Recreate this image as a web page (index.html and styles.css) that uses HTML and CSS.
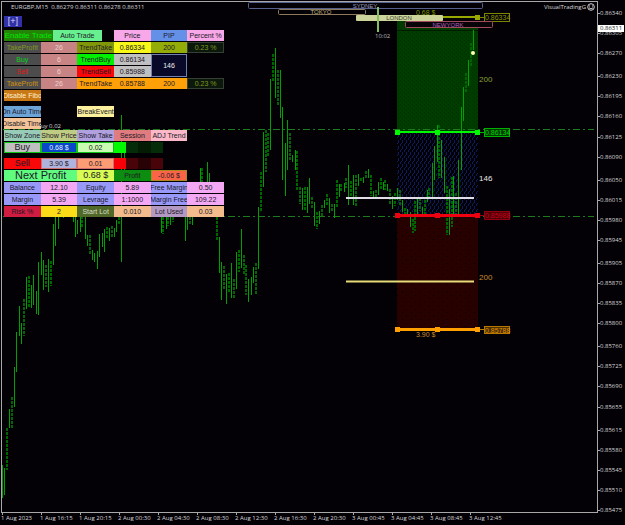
FILE: index.html
```html
<!DOCTYPE html>
<html lang="en">
<head>
<meta charset="utf-8">
<title>EURGBP,M15</title>
<link rel="stylesheet" href="styles.css">
</head>
<body>
<main class="terminal">
  <section class="plot">
    <svg class="chart" viewBox="2 2 595 510" preserveAspectRatio="xMinYMin meet" role="img" aria-label="EURGBP M15 price chart">
      <defs>
        <pattern id="blueDots" width="4" height="6" patternUnits="userSpaceOnUse">
          <path d="M0 0h1v2h-1zM2 2h1v3h-1zM1 5h1v1h-1z" fill="#0b1d5c"/>
        </pattern>
        <pattern id="redDots" width="9" height="7" patternUnits="userSpaceOnUse">
          <path d="M1 1h1v1h-1zM6 4h1v1h-1z" fill="#0c0000"/>
        </pattern>
        <pattern id="greenDots" width="4" height="4" patternUnits="userSpaceOnUse">
          <path d="M0 0h1v1h-1zM2 2h1v1h-1z" fill="#003000"/>
        </pattern>
      </defs>
      <rect x="397" y="21" width="81" height="111" fill="#003c00"/>
      <rect x="397" y="21" width="81" height="111" fill="url(#greenDots)"/>
      <rect x="397" y="132" width="81" height="84" fill="url(#blueDots)"/>
      <rect x="397" y="216" width="81" height="113" fill="#270000"/>
      <rect x="397" y="216" width="81" height="113" fill="url(#redDots)"/>
      <path d="M397 30.5H478" stroke="#001a00"/>
      <path class="level" d="M3 129.500H594M3 216.500H594"/>
      <path class="bars" d="M2.500 465V498M4.500 468V495M9.500 409V428M14.500 367V407M16.500 332V372M19.500 306V336M21.500 323V344M26.500 277V309M31.500 285V308M33.500 275V305M36.500 291V314M38.500 262V315M41.500 252V275M43.500 260V290M48.500 259V292M53.500 224V265M55.500 215V246M58.500 210V229M63.500 210V218M73.500 213V222M75.500 215V237M77.500 220V234M80.500 213V232M85.500 216V239M87.500 235V246M92.500 250V260M94.500 253V262M97.500 251V269M99.500 234V257M102.500 233V247M104.500 229V252M109.500 228V241M114.500 228V237M116.500 220V232M121.500 115V262M124.500 150V170M161.500 217V233M166.500 217V229M170.500 217V225M185.500 217V241M187.500 217V230M192.500 217V225M200.500 168V190M207.500 162V182M209.500 173V182M219.500 237V273M221.500 262V300M226.500 274V304M231.500 263V298M236.500 252V289M241.500 229V268M248.500 279V302M251.500 277V295M253.500 267V283M258.500 207V269M263.500 132V187M270.500 79V150M275.500 48V98M280.500 70V118M282.500 107V180M285.500 143V196M287.500 120V170M292.500 155V162M295.500 150V170M302.500 188V210M307.500 187V213M309.500 178V204M314.500 202V226M319.500 211V224M324.500 200V208M329.500 198V213M334.500 204V218M339.500 184V197M344.500 183V192M348.500 165V205M353.500 175V205M358.500 174V186M363.500 177V183M368.500 169V178M373.500 191V199M378.500 182V195M383.500 182V190M387.500 184V191M392.500 196V209M397.500 188V200M402.500 200V212M407.500 209V215M410.500 212V227M417.500 197V214M422.500 207V217M427.500 190V202M432.500 163V198M434.500 146V180M437.500 125V162M441.500 140V178M444.500 157V193M449.500 189V235M453.500 176V215M458.500 160V215M461.500 107V170M463.500 87V121M468.500 60V86M473.500 30V50"/>
      <path class="bars bars-dim" d="M7 428V470M12 397V428M24 299V336M29 276V308M46 265V287M51 261V286M82 212V227M90 235V255M107 227V239M112 226V237M119 217V224M163 217V234M168 217V226M173 217V222M190 217V225M202 168V182M217 217V240M224 266V290M229 273V292M234 279V299M239 250V272M244 255V275M246 265V295M256 263V295M261 172V212M266 130V172M268 133V156M273 54V81M278 70V105M290 133V161M297 151V190M300 187V204M305 187V210M312 197V208M317 212V229M322 205V216M327 194V205M332 204V212M337 180V208M341 184V191M346 178V188M351 181V198M356 175V206M361 178V181M366 171V179M371 175V196M376 190V198M381 178V190M385 180V190M390 189V204M395 193V206M400 190V206M405 208V215M413 219V233M415 201V231M420 198V211M425 200V215M429 188V200M439 125V178M447 186V235M452 177V227M456 193V214M466 73V93M471 43V67"/>
      <circle cx="473" cy="53" r="2" fill="#ffffb0"/>

      <g fill="none" stroke-width="2">
        <path d="M346 198H474" stroke="#e0dce8"/>
        <path d="M346 281.500H474" stroke="#e6dc78"/>
      </g>
      <g fill="#98a800"><path d="M440 16h38v2h-38zM475 15h5v5h-5z"/></g>
      <g fill="#00f800"><path d="M397 131h81v2h-81zM395 130h5v5h-5zM435 130h5v5h-5zM475 130h5v5h-5z"/></g>
      <g fill="#ee0010"><path d="M397 214h81v3h-81zM395 213h5v5h-5zM435 213h5v5h-5zM475 213h5v5h-5z"/></g>
      <g fill="#ffa000"><path d="M397 328h81v3h-81zM395 327h5v5h-5zM435 327h5v5h-5zM475 327h5v5h-5z"/></g>
      <g class="tag" stroke="#7c8400"><path d="M480 17.500h5"/><rect x="484.500" y="13.500" width="25" height="8"/><text x="485" y="20" fill="#8c9600">0.86334</text></g>
      <g class="tag" stroke="#00b000"><path d="M480 132.500h5"/><rect x="484.500" y="128.500" width="25" height="8" fill="#003800"/><text x="485" y="135" fill="#00d800">0.86134</text></g>
      <g class="tag" stroke="#900010"><path d="M480 215.500h5"/><rect x="484.500" y="211.500" width="25" height="8" fill="#500008"/><text x="485" y="218" fill="#c80018">0.85988</text></g>
      <g class="tag" stroke="#b87800"><path d="M480 329.500h5"/><rect x="484.500" y="326.500" width="25" height="7" fill="#4c3000"/><text x="485" y="333" fill="#e09000">0.85788</text></g>
      <g class="pips">
        <text x="479" y="82" fill="#8aa030">200</text>
        <text x="479" y="181" fill="#e8e8e8">146</text>
        <text x="479" y="280" fill="#c88c28">200</text>
      </g>
      <g class="money">
        <text x="416" y="15" fill="#7c9800">0.68 $</text>
        <text x="416" y="337" fill="#c88c28">3.90 $</text>
      </g>

      <g fill="none">
        <rect x="248.500" y="2.500" width="234" height="6" rx="1" stroke="#55608c"/>
        <rect x="278.500" y="9.500" width="87" height="5" rx="1" stroke="#8c7c5c"/>
        <rect x="356" y="15" width="87" height="6" rx="1" fill="#ccd49c"/>
        <rect x="405.500" y="21.500" width="87" height="6" rx="1" stroke="#a04c5c" fill="#080408"/>
      </g>
      <g class="session">
        <text x="365" y="8" fill="#9c9cb8">SYDNEY</text>
        <text x="321" y="14" fill="#c0b080">TOKYO</text>
        <text x="399" y="20" fill="#3c4030">LONDON</text>
        <text x="448" y="27" fill="#b060c0">NEWYORK</text>
      </g>
      <path d="M378 7V32" stroke="#80c060" stroke-width="2"/>
      <text class="note" x="375" y="38" fill="#b8b8b8">10:02</text>
      <text class="note" x="37" y="128" fill="#d8d8d8">Buy 0.02</text>
    </svg>

    <header class="caption">
      <h1 class="symbol">EURGBP,M15&nbsp; 0.86279 0.86311 0.86278 0.86311</h1>
      <p class="advisor">VisualTradingG
        <svg class="smiley" viewBox="0 0 8 8" aria-hidden="true"><circle cx="4" cy="4" r="3.300"/><path d="M2.500 2.500v1M5.500 2.500v1M2 4.800Q4 7 6 4.800"/></svg>
      </p>
    </header>

    <form class="panel">
      <div class="grid">
        <button type="button" class="c-toggle toggle">[+]</button>
      </div>
      <div class="grid">
        <button type="button" class="wide c-enable">Enable Trade</button>
        <button type="button" class="wide c-auto">Auto Trade</button>
        <span class="skip"></span>
        <span class="cell c-pink">Price</span>
        <span class="cell c-pip">PIP</span>
        <span class="cell c-pink">Percent %</span>

        <label class="cell c-label t-olive" for="tp-buy">TakeProfit</label>
        <input class="cell c-field" id="tp-buy" value="26">
        <button type="button" class="cell c-olive">TrendTake</button>
        <span class="cell c-yellow">0.86334</span>
        <span class="cell c-olive2">200</span>
        <span class="cell c-percent t-olive">0.23 %</span>

        <label class="cell c-label t-green" for="buy-line">Buy</label>
        <input class="cell c-field" id="buy-line" value="6">
        <button type="button" class="cell c-green">TrendBuy</button>
        <span class="cell c-silver">0.86134</span>
        <span class="cell tall c-navy">146</span>
        <span class="cell"></span>

        <label class="cell c-label t-red" for="sell-line">Sell</label>
        <input class="cell c-field" id="sell-line" value="6">
        <button type="button" class="cell c-red">TrendSell</button>
        <span class="cell c-silver">0.85988</span>
        <span class="cell"></span>

        <label class="cell c-label t-orange" for="tp-sell">TakeProfit</label>
        <input class="cell c-field" id="tp-sell" value="26">
        <button type="button" class="cell c-orange">TrendTake</button>
        <span class="cell c-orange">0.85788</span>
        <span class="cell c-orange">200</span>
        <span class="cell c-percent t-olive">0.23 %</span>

        <button type="button" class="cell c-fibo">Disable Fibo</button>
      </div>

      <div class="grid">
        <button type="button" class="cell c-blue">On Auto Time</button>
        <span class="cell"></span>
        <button type="button" class="cell c-cream">BreakEvent</button>
        <span class="rest"></span>

        <button type="button" class="cell c-peach">Disable Time</button>
        <span class="rest-long"></span>

        <button type="button" class="cell c-teal">Show Zone</button>
        <button type="button" class="cell c-sage">Show Price</button>
        <button type="button" class="cell c-lilac">Show Take</button>
        <button type="button" class="cell c-rose">Session</button>
        <button type="button" class="cell c-pale">ADJ Trend</button>
        <span class="cell"></span>

        <button type="button" class="cell c-silver t-mid e-green">Buy</button>
        <span class="cell c-royal e-green">0.68 $</span>
        <span class="cell c-mint e-green">0.02</span>
        <i class="bar b-green"></i><i class="bar b-green1"></i><i class="bar b-green2"></i><i class="bar b-green1"></i>
      </div>

      <div class="grid">
        <button type="button" class="cell c-red t-mid">Sell</button>
        <span class="cell c-steel e-red">3.90 $</span>
        <span class="cell c-salmon e-red">0.01</span>
        <i class="bar b-red"></i><i class="bar b-red1"></i><i class="bar b-red2"></i><i class="bar b-red1"></i>
        <span class="end"></span>

        <span class="double c-next t-large">Next Profit</span>
        <span class="cell c-lime t-mid">0.68 $</span>
        <span class="cell c-profit">Profit</span>
        <span class="cell c-loss">-0.06 $</span>
        <span class="cell"></span>

        <span class="cell c-peri">Balance</span><span class="cell c-orchid">12.10</span>
        <span class="cell c-peri">Equity</span><span class="cell c-orchid">5.89</span>
        <span class="cell c-peri">Free Margin</span><span class="cell c-orchid">0.50</span>

        <span class="cell c-peri">Margin</span><span class="cell c-orchid">5.39</span>
        <span class="cell c-peri">Levrage</span><span class="cell c-orchid">1:1000</span>
        <span class="cell c-peri">Margin Free</span><span class="cell c-orchid">109.22</span>

        <label class="cell c-crimson" for="risk">Risk %</label><input class="cell c-gold" id="risk" value="2">
        <label class="cell c-moss" for="lot">Start Lot</label><input class="cell c-sand" id="lot" value="0.010">
        <span class="cell c-mauve">Lot Used</span><span class="cell c-sand">0.03</span>
      </div>
    </form>
  </section>

  <aside class="scale">
    <ol class="prices">
      <li>0.86340</li><li class="current-row">0.86305<b class="current">0.86311</b></li><li class="far">0.86270</li><li>0.86230</li><li>0.86195</li><li>0.86160</li><li>0.86125</li><li class="far">0.86090</li><li>0.86050</li><li>0.86015</li><li>0.85980</li><li class="far">0.85945</li><li>0.85905</li><li>0.85870</li><li>0.85835</li><li class="far">0.85800</li><li>0.85760</li><li>0.85725</li><li>0.85690</li><li class="far">0.85655</li><li>0.85615</li><li>0.85580</li><li>0.85545</li><li>0.85510</li><li class="last">0.85475</li>
    </ol>
  </aside>

  <ol class="times">
    <li>1 Aug 2023</li><li>1 Aug 16:15</li><li>1 Aug 20:15</li><li>2 Aug 00:30</li><li>2 Aug 04:30</li><li>2 Aug 08:30</li><li>2 Aug 12:30</li><li>2 Aug 16:30</li><li>2 Aug 20:30</li><li>3 Aug 00:45</li><li>3 Aug 04:45</li><li>3 Aug 08:45</li><li>3 Aug 12:45</li>
  </ol>
</main>
</body>
</html>
```
FILE: styles.css
```css
* { box-sizing: border-box; }

body {
  margin: 0;
  background: #030006;
  color: #d8d8d8;
  font: 6px/8px "Open Sans", "Noto Sans", sans-serif;
}

h1, p, ol { margin: 0; padding: 0; font: inherit; list-style: none; }

.terminal {
  display: grid;
  grid-template-columns: 1fr 27px;
  grid-template-rows: 1fr 12px;
  min-height: 100vh;
  padding-left: 1px;
}

/* Chart area */
.plot {
  position: relative;
  margin-top: 1px;
  border: 1px solid #a8a8a8;
}
.chart {
  position: absolute;
  inset: 0;
  width: 100%;
  height: 100%;
}
.level { stroke: #1c7c1c; stroke-dasharray: 7 3 2 3; }
.bars { stroke: #00a000; fill: none; }
.bars-dim { stroke: #006400; stroke-width: 2; stroke-dasharray: 3 1; }
.tag { fill: none; }
.tag text { font: 7px "Liberation Sans", sans-serif; stroke: none; }
.pips { font: 8px "Liberation Sans", sans-serif; }
.money { font: 7px "Liberation Sans", sans-serif; }
.session { font: 6px "Liberation Sans", sans-serif; text-anchor: middle; }
.note { font: 6px "Open Sans", sans-serif; }

.caption {
  position: relative;
  display: flex;
  justify-content: space-between;
  padding: 1px 2px 0 9px;
  height: 14px;
}
.advisor { display: flex; gap: 1px; }
.smiley { width: 8px; height: 8px; fill: none; stroke: #d0d0d0; }

/* Trade panel */
.panel {
  position: relative;
  display: grid;
  gap: 5px;
  max-width: 222px;
  padding-left: 2px;
  font: 7px/9px "Liberation Sans", Arial, sans-serif;
}
.panel > .grid:first-child { margin-bottom: -2px; }
.grid {
  display: grid;
  grid-template-columns: repeat(18, 1fr);
  grid-auto-rows: 11px;
  row-gap: 1px;
}
.cell, .wide, .double, .toggle {
  display: flex;
  align-items: center;
  justify-content: center;
  grid-column: span 3;
  min-width: 0;
  margin: 0;
  padding: 0;
  border: 0 solid transparent;
  border-radius: 0;
  font: inherit;
  text-align: center;
  white-space: nowrap;
  overflow: hidden;
  color: #201828;
}
.cell.tall { grid-row: span 2; }
.wide { grid-column: span 4; }
.double { grid-column: span 6; }
.toggle { grid-column: span 3; width: 18px; }
.skip { grid-column: span 1; }
.rest { grid-column: span 9; }
.rest-long { grid-column: span 15; }
.end { grid-column: span 5; }

.cell.t-mid { font-size: 9px; }
.double.t-large { font-size: 11px; line-height: 11px; }

.c-toggle { background: #3030a8; }
.c-enable { background: #248408; }
.c-auto { background: #68f090; }
.c-pink { background: #f8a8e8; }
.c-pip { background: #6490e8; }
.c-label { background: #4c4c4c; }
.c-field { background: #c88484; }
.c-olive { background: #809808; }
.c-olive2 { background: #94ac08; }
.c-yellow { background: #f8f818; }
.c-percent { background: #0c180c; border: 1px solid #344034; }
.c-green { background: #00f000; }
.c-red { background: #f80808; }
.c-silver { background: #c0c0c0; }
.cell.c-navy { background: #080828; border: 1px solid #7080b0; color: #f0f0f0; }
.c-orange { background: #ffa008; }
.c-fibo { background: #c87814; }
.c-blue { background: #6ca4d8; }
.c-cream { background: #fcf09c; }
.c-peach { background: #f4c498; }
.c-teal { background: #98ccb8; }
.c-sage { background: #c0cc84; }
.c-lilac { background: #b0a0e0; }
.c-rose { background: #e07c80; }
.c-pale { background: #fcb8c8; }
.cell.c-royal { background: #0848c8; color: #e8f0ff; }
.c-mint { background: #c8fcb0; }
.c-steel { background: #b0b4dc; }
.c-salmon { background: #fc9c74; }
.c-next { background: #60fc80; }
.c-lime { background: #d8fc54; }
.c-profit { background: #0c8c10; }
.c-loss { background: #fc6448; border: 1px solid #b08820; }
.c-peri { background: #9898f8; }
.c-orchid { background: #f4a8f4; }
.c-crimson { background: #d01c40; }
.c-gold { background: #fcdc18; }
.cell.c-moss { background: #506828; color: #d8dcc8; }
.c-sand { background: #f4bc8c; }
.c-mauve { background: #b498c4; }

.cell.c-fibo { color: #fff0d0; }
.cell.c-field { color: #ecd0d0; }
.cell.t-olive { color: #80981c; }
.cell.t-green { color: #00d818; }
.cell.t-red { color: #e01818; }
.cell.t-orange { color: #d09010; }
.wide.c-enable { color: #00e800; font-size: 8px; }
.toggle.c-toggle { color: #d8d8f0; font-size: 9px; }
.e-green { border: 1px solid #10c018; }
.e-red { border: 1px solid #d07070; }

.b-green { background: #00f800; }
.b-green1 { background: #042c08; }
.b-green2 { background: #041c04; }
.b-red { background: #f80008; }
.b-red1 { background: #480408; }
.b-red2 { background: #280204; }

/* Price scale */
.scale { grid-row: span 2; display: grid; padding: 9px 0 11px; }
.prices { display: flex; flex-direction: column; }
.prices li { position: relative; flex: 35 0 0; padding-left: 2px; }
.prices li::before {
  content: "";
  position: absolute;
  left: 0;
  top: 4px;
  width: 2px;
  height: 1px;
  background: #a8a8a8;
}
.prices .far { flex-grow: 40; }
.prices .last { flex: none; height: 8px; }
.current {
  position: absolute;
  left: 0;
  top: -4px;
  right: 1px;
  padding-left: 2px;
  line-height: 7px;
  font-weight: 400;
  background: #fff;
  color: #202020;
}

/* Time scale */
.times { display: flex; }
.times li { position: relative; flex: 0 0 39px; padding-top: 1px; white-space: nowrap; }
.times li::before {
  content: "";
  position: absolute;
  left: 1px;
  top: 0;
  width: 1px;
  height: 2px;
  background: #a8a8a8;
}
```
